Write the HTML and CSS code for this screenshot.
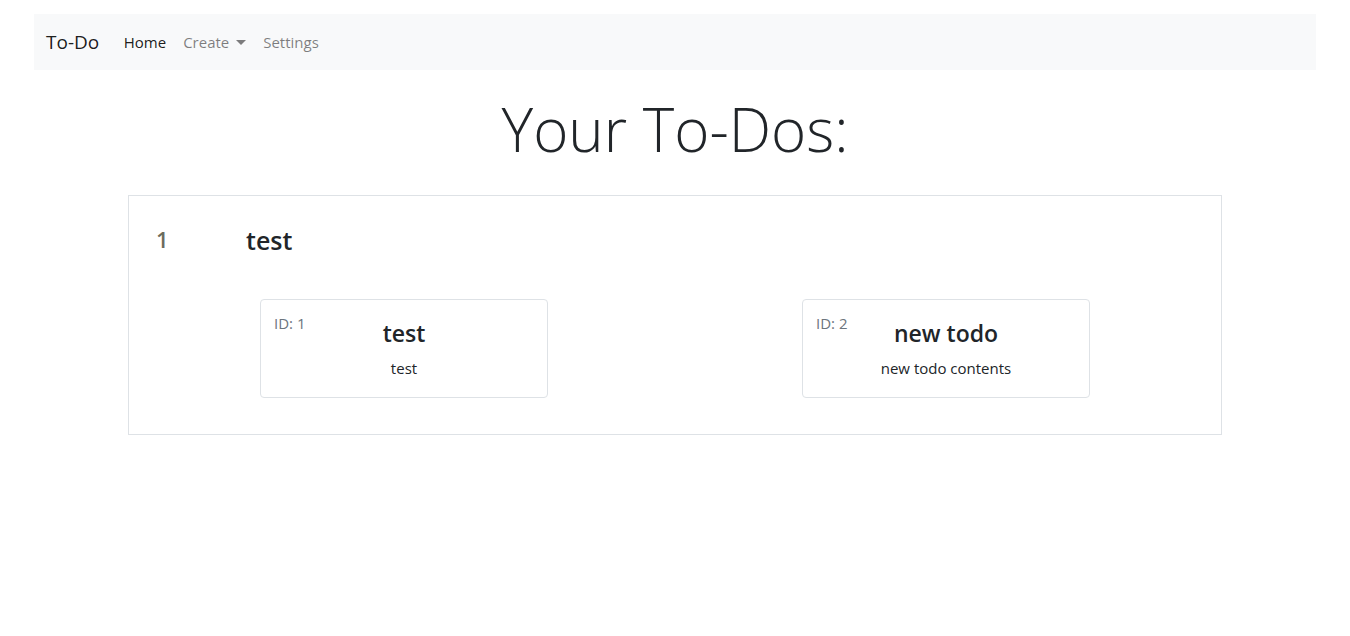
FILE: index.html
```html
<!DOCTYPE html>
<html lang="en">
<head>
<meta charset="utf-8">
<title>To-Do</title>
<link rel="stylesheet" href="styles.css">
</head>
<body>
<div class="page">
  <nav class="navbar">
    <a class="brand" href="#">To-Do</a>
    <ul class="nav">
      <li><a class="nav-link active" href="#">Home</a></li>
      <li><a class="nav-link" href="#">Create <span class="caret"></span></a></li>
      <li><a class="nav-link" href="#">Settings</a></li>
    </ul>
  </nav>
  <main class="content">
    <h1 class="title">Your To-Dos:</h1>
    <section class="list">
      <div class="list-head">
        <div class="list-num">1</div>
        <h4 class="list-name">test</h4>
      </div>
      <div class="items">
        <div class="item-col">
          <div class="card">
            <span class="card-id">ID: 1</span>
            <h4 class="card-title">test</h4>
            <p class="card-text">test</p>
          </div>
        </div>
        <div class="item-col">
          <div class="card">
            <span class="card-id">ID: 2</span>
            <h4 class="card-title">new todo</h4>
            <p class="card-text">new todo contents</p>
          </div>
        </div>
      </div>
    </section>
  </main>
</div>
</body>
</html>
```

FILE: styles.css
```css
* { box-sizing: border-box; }
html, body { margin: 0; padding: 0; background: #fff; }
body {
  font-family: "Open Sans", "Noto Sans", "Liberation Sans", sans-serif;
  font-size: 16px;
  line-height: 1.5;
  color: #212529;
}
a { text-decoration: none; }

.page { padding: 14px 34px; }

.navbar {
  display: flex;
  align-items: center;
  height: 56px;
  padding: 0 12px;
  background: #f8f9fa;
}
.brand {
  font-size: 19px;
  color: rgba(0,0,0,.9);
  margin-right: 16px;
  line-height: 1.5;
}
.nav {
  display: flex;
  list-style: none;
  margin: 0;
  padding: 0;
}
.nav-link {
  display: block;
  padding: 8px 8.5px;
  font-size: 15px;
  color: rgba(0,0,0,.5);
}
.nav-link.active { color: rgba(0,0,0,.9); }
.caret {
  display: inline-block;
  width: 0; height: 0;
  margin-left: 3px;
  vertical-align: 3px;
  border-top: 5px solid rgba(0,0,0,.5);
  border-left: 5px solid transparent;
  border-right: 5px solid transparent;
}

.content { display: flex; flex-direction: column; align-items: center; }
.title {
  margin: 23px 0 30px;
  font-size: 60px;
  font-weight: 300;
  line-height: 1.2;
  color: #212529;
}

.list {
  width: 1094px;
  border: 1px solid #dee2e6;
  padding: 29px 4px 36px;
}
.list-head {
  display: flex;
  align-items: flex-start;
  padding-left: 23px;
}
.list-num {
  width: 90px;
  margin-top: 1px;
  font-size: 22px;
  font-weight: 600;
  line-height: 1.2;
  color: #6c6c5c;
}
.list-name {
  margin: 0;
  font-size: 25px;
  font-weight: 600;
  line-height: 1.2;
}
.items {
  display: grid;
  grid-template-columns: 1fr 1fr;
  margin-top: 44px;
}
.item-col { display: flex; justify-content: center; }
.card {
  position: relative;
  width: 288px;
  height: 99px;
  border: 1px solid #dee2e6;
  border-radius: 4px;
  padding: 20px 12px 12px;
  text-align: center;
}
.card-id {
  position: absolute;
  left: 13px;
  top: 12px;
  font-size: 15px;
  color: #6c757d;
}
.card-title {
  margin: 0 0 9px;
  font-size: 23px;
  font-weight: 600;
  line-height: 1.2;
}
.card-text {
  margin: 0;
  font-size: 15px;
}
```
